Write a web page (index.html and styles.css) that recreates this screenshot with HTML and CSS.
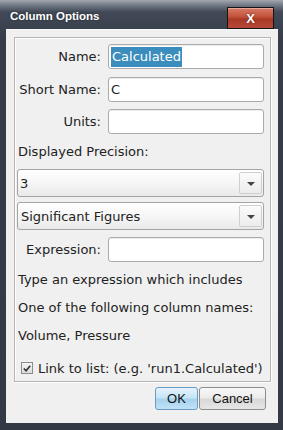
FILE: index.html
```html
<!DOCTYPE html>
<html>
<head>
<meta charset="utf-8">
<link rel="stylesheet" href="styles.css">
</head>
<body>
<div class="window">
  <div class="titlebar">
    <span class="title">Column Options</span>
    <span class="close">X</span>
  </div>
  <div class="body">
    <div class="panel">
      <div class="form">
        <label class="lbl">Name:</label>
        <div class="input"><span class="sel">Calculated</span></div>
        <label class="lbl">Short Name:</label>
        <div class="input">C</div>
        <label class="lbl">Units:</label>
        <div class="input"></div>
      </div>
      <div class="caption">Displayed Precision:</div>
      <div class="select sel1"><span class="val">3</span><span class="arrow"></span></div>
      <div class="select sel2"><span class="val">Significant Figures</span><span class="arrow"></span></div>
      <div class="form form2">
        <label class="lbl">Expression:</label>
        <div class="input"></div>
      </div>
      <div class="texts">
        <div class="line">Type an expression which includes</div>
        <div class="line">One of the following column names:</div>
        <div class="line">Volume, Pressure</div>
      </div>
      <div class="check-row">
        <span class="checkbox"><svg width="11" height="11" viewBox="0 0 11 11"><path d="M2 5.5 L4.5 8 L9 2.5" fill="none" stroke="#333" stroke-width="1.8"/></svg></span>
        <span>Link to list: (e.g. 'run1.Calculated')</span>
      </div>
    </div>
    <div class="buttons">
      <span class="btn ok">OK</span>
      <span class="btn cancel">Cancel</span>
    </div>
  </div>
</div>
</body>
</html>
```
FILE: styles.css
```css
html, body { margin: 0; padding: 0; }
body { width: 283px; height: 430px; overflow: hidden; font-family: "DejaVu Sans", sans-serif; }
.window {
  width: 283px; height: 430px;
  display: flex; flex-direction: column;
  background: linear-gradient(to bottom, #a3a7ad 0px, #6b7280 6px, #414957 12px, #363d49 40px, #333a46 100%);
}
.titlebar {
  height: 29px; flex: none;
  display: flex; align-items: flex-start; justify-content: space-between;
}
.title {
  font-family: "Liberation Sans", Arial, sans-serif; font-weight: bold; font-size: 11.5px;
  color: #fff; margin: 10px 0 0 10px;
  text-shadow: 0 0 2px rgba(0,0,0,0.5);
}
.close {
  margin: 7px 9px 0 0;
  width: 45px; height: 20px;
  border: 1px solid #151515;
  background: linear-gradient(to bottom, #d87a66 0%, #c2503a 45%, #a83a26 55%, #b7493a 100%);
  color: #fff; font-family: "Liberation Sans", Arial, sans-serif; font-weight: bold; font-size: 13px;
  display: flex; align-items: center; justify-content: center;
  text-shadow: 0 0 2px #5a1a10;
  box-shadow: inset 0 1px 0 rgba(255,255,255,0.35);
}
.body {
  flex: 1; margin: 0 5px 7px 6px;
  background: #f0f0f0;
  border-top: 1px solid #fafafa;
  display: flex; flex-direction: column;
  font-size: 13px; color: #222;
}
.panel {
  margin: 7px 7px 0 8px;
  border: 1px solid #b4b4b4;
  box-shadow: inset 1px 1px 0 #ffffff, 1px 1px 0 #ffffff;
  padding: 6px 6px 0 1px;
  height: 345px; box-sizing: border-box;
}
.form {
  display: grid; grid-template-columns: 85px 1fr;
  column-gap: 7px; row-gap: 7.5px; align-items: center;
}
.lbl { text-align: right; white-space: nowrap; }
.input {
  height: 25px; box-sizing: border-box;
  background: #fff; border: 1px solid #aaaaaa; border-radius: 3px;
  box-shadow: inset 0 1px 1px rgba(0,0,0,0.08);
  display: flex; align-items: center; padding-left: 2px;
}
.sel { background: #3a8dbd; color: #fff; padding: 1px 1px; line-height: 18px; }
.caption { margin: 9px 0 0 2px; height: 18px; line-height: 18px; }
.select {
  margin-left: 1px;
  height: 28px; box-sizing: border-box;
  border: 1px solid #a4a4a4; border-radius: 3px;
  background: linear-gradient(to bottom, #ffffff 0%, #f6f6f6 50%, #e9e9e9 100%);
  display: flex; align-items: center; justify-content: space-between;
}
.sel1 { margin-top: 8px; }
.sel2 { margin-top: 5px; }
.val { padding-left: 2px; }
.sel2 .val { padding-left: 3px; }
.arrow {
  width: 23px; height: 22px; box-sizing: border-box; margin-right: 1px;
  border: 1px solid #cfcfcf; border-radius: 2px;
  background: linear-gradient(to bottom, #fbfbfb, #ececec);
  position: relative;
}
.arrow::after {
  content: ""; position: absolute; left: 7px; top: 9px;
  border-left: 4px solid transparent; border-right: 4px solid transparent;
  border-top: 4px solid #444;
}
.form2 { margin-top: 7px; }
.texts { margin-top: 4px; padding-left: 2px; }
.line { height: 28px; line-height: 28px; white-space: nowrap; }
.check-row {
  margin-top: 4px; height: 28px; display: flex; align-items: center; gap: 5px; padding-left: 5px;
  white-space: nowrap;
}
.checkbox {
  width: 12px; height: 12px; box-sizing: border-box;
  border: 1px solid #8c8c8c; background: linear-gradient(#f4f4f4, #dcdcdc);
  display: flex; align-items: center; justify-content: center;
}
.buttons {
  display: flex; justify-content: flex-end; gap: 1px;
  margin: 5px 12px 0 0;
}
.btn {
  height: 23px; box-sizing: border-box; border-radius: 3px;
  display: flex; align-items: center; justify-content: center;
  font-family: "Liberation Sans", Arial, sans-serif; font-size: 13px; color: #111;
}
.ok {
  width: 43px;
  border: 1px solid #6b9cc0;
  background: linear-gradient(to bottom, #e6f4fc 0%, #c6e4f6 45%, #a6d2ee 55%, #c2e2f6 100%);
}
.cancel {
  width: 67px;
  border: 1px solid #8d8d8d;
  background: linear-gradient(to bottom, #f8f8f8 0%, #ececec 45%, #d8d8d8 55%, #e6e6e6 100%);
}
```
